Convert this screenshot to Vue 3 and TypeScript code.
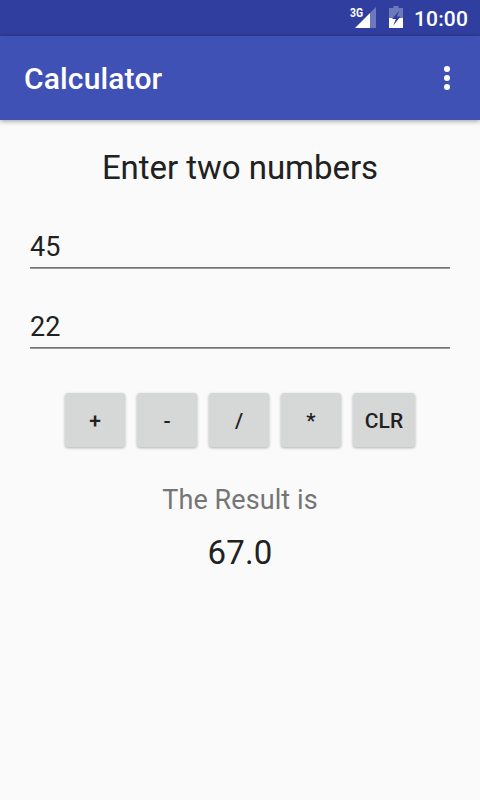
<script setup lang="ts">
import { ref } from 'vue'

const first = ref('45')
const second = ref('22')
const result = ref('67.0')

function press(op: string): void {
  const a = Number(first.value)
  const b = Number(second.value)
  if (op === 'CLR') {
    first.value = ''
    second.value = ''
    result.value = '0.0'
    return
  }
  const value = op === '+' ? a + b : op === '-' ? a - b : op === '/' ? a / b : a * b
  result.value = Number.isInteger(value) ? value.toFixed(1) : String(value)
}

const ops: string[] = ['+', '-', '/', '*', 'CLR']
</script>

<template>
  <div class="screen">
    <div class="status">
      <svg class="signal" width="28" height="24" viewBox="0 0 28 24">
        <path d="M27 2V23H21V8Z" fill="#fff" fill-opacity=".3" />
        <path d="M21 8V23H6Z" fill="#fff" />
        <text class="net" x="1" y="11.500" textLength="13" lengthAdjust="spacingAndGlyphs">3G</text>
      </svg>
      <svg class="battery" width="14" height="22" viewBox="0 0 14 22">
        <path d="M4.500 0H9.500V2H14V12H0V2H4.500Z" fill="#fff" fill-opacity=".3" />
        <path d="M0 12H14V22H0Z" fill="#fff" />
        <path d="M10.500 4.500L3 13H6.800L4.300 19.500L11.500 10.500H7.800Z" fill="#303f9f" />
      </svg>
      <span class="clock">10:00</span>
    </div>
    <header class="bar">
      <h1>Calculator</h1>
      <svg class="more" width="6" height="24" viewBox="0 0 6 24">
        <circle cx="3" cy="3" r="3" /><circle cx="3" cy="12" r="3" /><circle cx="3" cy="21" r="3" />
      </svg>
    </header>
    <main>
      <h2>Enter two numbers</h2>
      <input v-model="first" class="field" />
      <input v-model="second" class="field" />
      <div class="buttons">
        <button v-for="op in ops" :key="op" :class="{ wide: op === 'CLR' }" @click="press(op)">{{ op }}</button>
      </div>
      <p class="label">The Result is</p>
      <p class="result">{{ result }}</p>
    </main>
  </div>
</template>

<style>
body { background: #fafafa; }
</style>
<style scoped>
.screen { width: 480px; height: 800px; background: #fafafa; font-family: Roboto, sans-serif; color: #212121; overflow: hidden; }
.status { height: 36px; background: #303f9f; display: flex; justify-content: flex-end; align-items: flex-start; padding-right: 12px; box-sizing: border-box; }
.signal { margin: 5px 12px 0 0; }
.battery { margin: 6px 11px 0 0; }
.net { font: 700 12px Roboto, sans-serif; fill: #fff; }
.clock { font-size: 21px; font-weight: 500; line-height: 39px; letter-spacing: .15px; color: #fff; }
.bar { height: 84px; background: #3f51b5; display: flex; align-items: center; justify-content: space-between; padding: 0 30px 0 24px; box-sizing: border-box; color: #fff; box-shadow: 0 1px 5px rgba(0,0,0,.4); }
h1 { margin: 2px 0 0; font-size: 30px; font-weight: 500; line-height: 36px; letter-spacing: .15px; }
.more { fill: #fff; }
main { display: flex; flex-direction: column; align-items: center; padding: 25px 30px 0; }
h2 { margin: 0; font-size: 33px; font-weight: 400; line-height: 46px; letter-spacing: -.04px; }
.field { width: 420px; height: 44px; margin: 33px 0 1px; padding: 3px 0 0; box-sizing: border-box; border: 0; border-bottom: 1px solid #747474; border-radius: 0; outline: 0; box-shadow: 0 1px #999; background: transparent; color: #212121; font: 400 27px Roboto, sans-serif; }
.field + .field { margin-top: 35px; }
.buttons { display: flex; gap: 12px; margin-top: 44px; }
button { width: 60px; height: 54px; padding: 2px 0 0; border: 0; border-radius: 3px; background: #d6d7d7; color: #212121; font: 500 21px Roboto, sans-serif; box-shadow: 0 1px 3px rgba(0,0,0,.3); }
button.wide { width: 62px; }
.label { margin: 35px 0 0; font-size: 27px; line-height: 36px; letter-spacing: .08px; color: #757575; }
.result { margin: 14px 0 0; font-size: 33px; line-height: 42px; letter-spacing: .2px; }
</style>
